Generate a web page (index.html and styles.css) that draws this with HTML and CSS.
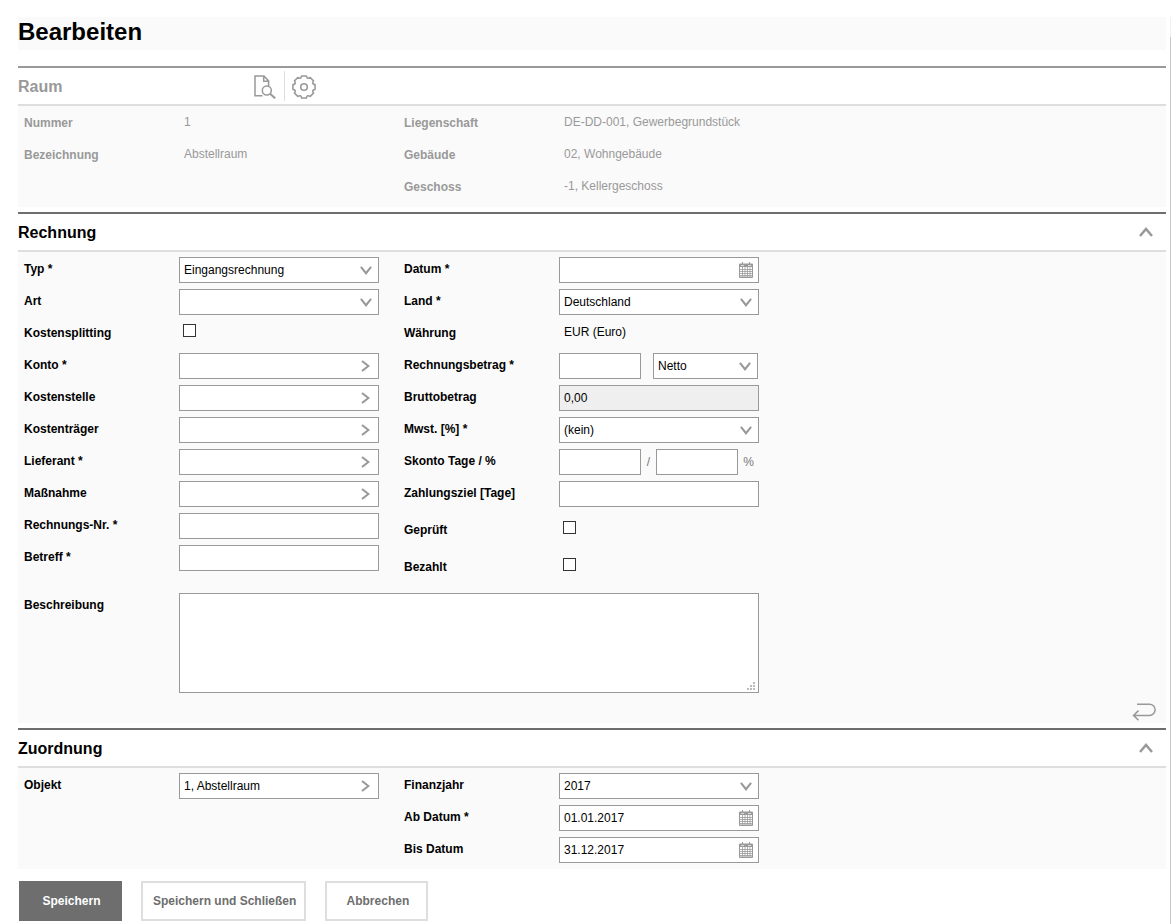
FILE: index.html
```html
<!DOCTYPE html>
<html lang="de">
<head>
<meta charset="utf-8">
<meta name="viewport" content="width=device-width, initial-scale=1">
<title>Bearbeiten</title>
<link rel="stylesheet" href="styles.css">
</head>
<body>
<svg class="sprite" aria-hidden="true">
  <symbol id="down" viewBox="0 0 12 9"><path d="M.9.8 6 7.2 11.1.8" fill="none" stroke="currentColor" stroke-width="2.1"/></symbol>
  <symbol id="right" viewBox="0 0 9 12"><path d="M1 1 7.4 6 1 11" fill="none" stroke="currentColor" stroke-width="2.1"/></symbol>
  <symbol id="up" viewBox="0 0 14 10"><path d="M1 9 7 2 13 9" fill="none" stroke="currentColor" stroke-width="2.5"/></symbol>
  <symbol id="calendar" viewBox="0 0 14 16">
    <path d="M1 1.5h12a1 1 0 0 1 1 1V15a1 1 0 0 1-1 1H1a1 1 0 0 1-1-1V2.500a1 1 0 0 1 1-1z" fill="currentColor"/>
    <path d="M3 0h1v3H3zM10 0h1v3h-1z" fill="currentColor"/>
    <path d="M2 3h3v1H2zM9 3h3v1H9z" fill="#ddd"/>
    <path d="M1 5h12v9.500H1z" fill="#fff"/>
    <path d="M3.500 5v9.500M6 5v9.500M8.500 5v9.500M11 5v9.500M1 7.500h12M1 9.500h12M1 11.500h12M1 13.500h12" fill="none" stroke="currentColor" stroke-width=".8"/>
  </symbol>
</svg>
<main class="page">
  <h1 class="page-title">Bearbeiten</h1>

  <section class="section section-muted">
    <header class="section-head">
      <h2 class="section-title section-title-tools">Raum</h2>
      <button class="icon-button tool-preview" type="button" aria-label="Vorschau">
        <svg width="22" height="24" viewBox="0 0 22 24" fill="none" stroke="currentColor" stroke-width="1.5"><path d="M8.500 20.800H1V.9h9l4.600 5v5M9.700 1v5.200h5"/><circle cx="12.800" cy="15.500" r="4.500"/><path d="m16 18.800 5.200 4.500" stroke-width="2"/></svg>
      </button>
      <button class="icon-button tool-settings" type="button" aria-label="Einstellungen">
        <svg width="24" height="24" viewBox="0 0 24 24" fill="none" stroke="currentColor" stroke-width="1.6" stroke-linejoin="round"><path d="M9.650.95h4.700Q15.100 4.600 18.150 2.500L21.500 5.850Q19.400 8.900 23.050 9.650V14.350Q19.400 15.100 21.500 18.150L18.150 21.500Q15.100 19.400 14.350 23.050H9.650Q8.900 19.400 5.850 21.500L2.500 18.150Q4.600 15.100.95 14.350V9.650Q4.600 8.900 2.500 5.850L5.850 2.500Q8.900 4.600 9.650.95z"/><circle cx="12" cy="12" r="3.300"/></svg>
      </button>
    </header>
    <div class="section-body columns">
      <dl class="column">
        <div class="row"><dt class="label">Nummer</dt><dd class="value">1</dd></div>
        <div class="row"><dt class="label">Bezeichnung</dt><dd class="value">Abstellraum</dd></div>
      </dl>
      <dl class="column">
        <div class="row"><dt class="label">Liegenschaft</dt><dd class="value">DE-DD-001, Gewerbegrundstück</dd></div>
        <div class="row"><dt class="label">Gebäude</dt><dd class="value">02, Wohngebäude</dd></div>
        <div class="row"><dt class="label">Geschoss</dt><dd class="value">-1, Kellergeschoss</dd></div>
      </dl>
    </div>
  </section>

  <form class="form">
    <section class="section">
      <header class="section-head">
        <h2 class="section-title">Rechnung</h2>
        <button class="icon-button toggle" type="button" aria-label="Rechnung einklappen"><svg width="14" height="10"><use href="#up"/></svg></button>
      </header>
      <div class="section-body">
        <div class="columns">
          <div class="column">
            <div class="row"><label class="label" for="typ">Typ *</label><div class="field"><select class="control" id="typ"><option>Eingangsrechnung</option></select><svg class="arrow" width="12" height="9"><use href="#down"/></svg></div></div>
            <div class="row"><label class="label" for="art">Art</label><div class="field"><select class="control" id="art"><option></option></select><svg class="arrow" width="12" height="9"><use href="#down"/></svg></div></div>
            <div class="row"><label class="label" for="split">Kostensplitting</label><input class="check" type="checkbox" id="split"></div>
            <div class="row"><label class="label" for="konto">Konto *</label><div class="field"><input class="control" type="text" id="konto"><button class="icon-button lookup" type="button" aria-label="Konto wählen"><svg width="9" height="12"><use href="#right"/></svg></button></div></div>
            <div class="row"><label class="label" for="stelle">Kostenstelle</label><div class="field"><input class="control" type="text" id="stelle"><button class="icon-button lookup" type="button" aria-label="Kostenstelle wählen"><svg width="9" height="12"><use href="#right"/></svg></button></div></div>
            <div class="row"><label class="label" for="traeger">Kostenträger</label><div class="field"><input class="control" type="text" id="traeger"><button class="icon-button lookup" type="button" aria-label="Kostenträger wählen"><svg width="9" height="12"><use href="#right"/></svg></button></div></div>
            <div class="row"><label class="label" for="lieferant">Lieferant *</label><div class="field"><input class="control" type="text" id="lieferant"><button class="icon-button lookup" type="button" aria-label="Lieferant wählen"><svg width="9" height="12"><use href="#right"/></svg></button></div></div>
            <div class="row"><label class="label" for="massnahme">Maßnahme</label><div class="field"><input class="control" type="text" id="massnahme"><button class="icon-button lookup" type="button" aria-label="Maßnahme wählen"><svg width="9" height="12"><use href="#right"/></svg></button></div></div>
            <div class="row"><label class="label" for="nr">Rechnungs-Nr. *</label><div class="field"><input class="control" type="text" id="nr"></div></div>
            <div class="row"><label class="label" for="betreff">Betreff *</label><div class="field"><input class="control" type="text" id="betreff"></div></div>
          </div>
          <div class="column">
            <div class="row"><label class="label" for="datum">Datum *</label><div class="field"><input class="control" type="text" id="datum"><button class="icon-button picker" type="button" aria-label="Datum wählen"><svg width="14" height="16"><use href="#calendar"/></svg></button></div></div>
            <div class="row"><label class="label" for="land">Land *</label><div class="field"><select class="control" id="land"><option>Deutschland</option></select><svg class="arrow" width="12" height="9"><use href="#down"/></svg></div></div>
            <div class="row"><span class="label">Währung</span><span class="value">EUR (Euro)</span></div>
            <div class="row"><label class="label" for="betrag">Rechnungsbetrag *</label>
              <div class="group group-amount"><div class="field"><input class="control" type="text" id="betrag"></div><div class="field"><select class="control" aria-label="Betragsart"><option>Netto</option></select><svg class="arrow" width="12" height="9"><use href="#down"/></svg></div></div></div>
            <div class="row"><label class="label" for="brutto">Bruttobetrag</label><div class="field field-readonly"><input class="control" type="text" id="brutto" value="0,00" readonly></div></div>
            <div class="row"><label class="label" for="mwst">Mwst. [%] *</label><div class="field"><select class="control" id="mwst"><option>(kein)</option></select><svg class="arrow" width="12" height="9"><use href="#down"/></svg></div></div>
            <div class="row"><label class="label" for="skonto">Skonto Tage / %</label>
              <div class="group group-discount"><div class="field"><input class="control" type="text" id="skonto"></div><span class="unit">/</span><div class="field"><input class="control" type="text" aria-label="Skonto Prozent"></div><span class="unit">%</span></div></div>
            <div class="row"><label class="label" for="ziel">Zahlungsziel [Tage]</label><div class="field"><input class="control" type="text" id="ziel"></div></div>
            <div class="row row-check"><label class="label" for="geprueft">Geprüft</label><input class="check" type="checkbox" id="geprueft"></div>
            <div class="row row-check"><label class="label" for="bezahlt">Bezahlt</label><input class="check" type="checkbox" id="bezahlt"></div>
          </div>
        </div>
        <div class="row row-notes">
          <label class="label" for="notes">Beschreibung</label>
          <div class="field field-notes"><textarea class="control notes" id="notes"></textarea>
            <svg class="grip" width="8" height="8" fill="currentColor"><path d="M6 0h2v2H6zM3 3h2v2H3zM6 3h2v2H6zM0 6h2v2H0zM3 6h2v2H3zM6 6h2v2H6z"/></svg>
          </div>
        </div>
        <div class="section-foot">
          <button class="icon-button" type="button" aria-label="Zurück"><svg width="24" height="18" viewBox="0 0 24 18" fill="none" stroke="currentColor" stroke-width="1.5"><path d="M5 1.200h12.500a5.600 5.600 0 0 1 0 11.200H1.400M6.500 7.600l-5 4.800 5 4.800"/></svg></button>
        </div>
      </div>
    </section>

    <section class="section">
      <header class="section-head">
        <h2 class="section-title">Zuordnung</h2>
        <button class="icon-button toggle" type="button" aria-label="Zuordnung einklappen"><svg width="14" height="10"><use href="#up"/></svg></button>
      </header>
      <div class="section-body columns">
        <div class="column">
          <div class="row"><label class="label" for="objekt">Objekt</label><div class="field"><input class="control" type="text" id="objekt" value="1, Abstellraum"><button class="icon-button lookup" type="button" aria-label="Objekt wählen"><svg width="9" height="12"><use href="#right"/></svg></button></div></div>
        </div>
        <div class="column">
          <div class="row"><label class="label" for="jahr">Finanzjahr</label><div class="field"><select class="control" id="jahr"><option>2017</option></select><svg class="arrow" width="12" height="9"><use href="#down"/></svg></div></div>
          <div class="row"><label class="label" for="ab">Ab Datum *</label><div class="field"><input class="control" type="text" id="ab" value="01.01.2017"><button class="icon-button picker" type="button" aria-label="Ab Datum wählen"><svg width="14" height="16"><use href="#calendar"/></svg></button></div></div>
          <div class="row"><label class="label" for="bis">Bis Datum</label><div class="field"><input class="control" type="text" id="bis" value="31.12.2017"><button class="icon-button picker" type="button" aria-label="Bis Datum wählen"><svg width="14" height="16"><use href="#calendar"/></svg></button></div></div>
        </div>
      </div>
    </section>

    <div class="actions">
      <button class="button button-primary" type="submit">Speichern</button>
      <button class="button" type="submit">Speichern und Schließen</button>
      <button class="button" type="button">Abbrechen</button>
    </div>
  </form>
</main>
</body>
</html>
```
FILE: styles.css
```css
* {
  box-sizing: border-box;
}

body {
  margin: 0;
  background: #fff;
  color: #000;
  font: 12px "Liberation Sans", Arial, sans-serif;
}

.sprite {
  display: none;
}

.page {
  min-height: 100vh;
  padding: 17px 5px 3px 18px;
  background: linear-gradient(transparent 17px, #f0f0f0 17px, #f0f0f0 37px, #c8c8c8 37px) right / 1px 100% no-repeat;
}

.page-title {
  margin: 0 0 16px;
  background: #fafafa;
  font-size: 24px;
  line-height: 30px;
  padding-bottom: 3px;
}

.section {
  margin-bottom: 5px;
}

.section-head {
  display: flex;
  align-items: center;
  height: 40px;
  border-top: 2px solid #6e6e6e;
  border-bottom: 2px solid #dedede;
}

.section-muted {
  color: #999;
}

.section-muted .section-head {
  border-top-color: #999;
}

.section-title {
  margin: 0;
  padding-top: 2px;
  font-size: 16px;
  line-height: 20px;
}

.section-title-tools {
  width: 236px;
}

.icon-button {
  display: flex;
  align-items: center;
  justify-content: center;
  padding: 0;
  border: 0;
  background: none;
  color: #999;
  cursor: pointer;
}

.tool-preview,
.tool-settings {
  height: 30px;
  padding-top: 2px;
}

.tool-preview {
  width: 30px;
  padding-right: 8px;
}

.tool-settings {
  padding-left: 7px;
  border-left: 1px solid #dedede;
}

.toggle {
  margin: 0 13px 0 auto;
}

.section-body {
  padding: 5px 0 0 6px;
  background: #fafafa;
}

.columns {
  display: flex;
  flex-wrap: wrap;
  column-gap: 25px;
}

.column {
  margin: 0;
}

.row {
  display: grid;
  grid-template-columns: 155px 200px;
  align-items: start;
  min-height: 32px;
}

.row-check {
  min-height: 37px;
  padding-top: 5px;
}

.row-notes {
  grid-template-columns: 155px 580px;
  margin-top: 6px;
}

.label {
  font-weight: bold;
  line-height: 24px;
}

.value {
  margin: 0;
  padding-left: 5px;
  line-height: 22px;
}

.field {
  display: grid;
  grid-template-columns: minmax(0, 1fr);
  align-items: center;
  height: 26px;
  border: 1px solid #999;
  background: #fff;
}

.field > * {
  grid-area: 1 / 1;
}

.field-readonly {
  background: #efefef;
}

.control {
  width: 100%;
  height: 24px;
  margin: 0;
  padding: 0 4px;
  border: 0;
  border-radius: 0;
  background: transparent;
  color: #000;
  font: inherit;
  appearance: none;
}

.arrow,
.grip {
  justify-self: end;
  color: #999;
  pointer-events: none;
}

.arrow {
  margin-right: 6px;
}

.lookup {
  justify-self: end;
  margin-right: 8px;
}

.picker {
  justify-self: end;
  margin-right: 5px;
}

.group {
  display: grid;
  align-items: center;
}

.group-amount {
  grid-template-columns: 82px 105px;
  column-gap: 12px;
}

.group-discount {
  grid-template-columns: 82px 15px 82px 1fr;
}

.unit {
  color: #777;
  text-align: center;
}

.check {
  width: 13px;
  height: 13px;
  margin: 3px 0 0 4px;
  border: 1px solid #333;
  background: #fff;
  appearance: none;
}

.check:checked {
  background: #6e6e6e;
}

.field-notes {
  height: 100px;
}

.notes {
  height: 98px;
  padding: 4px;
  resize: none;
}

.grip {
  align-self: end;
  margin: 0 3px 2px 0;
  color: #bbb;
}

.section-foot {
  display: flex;
  justify-content: flex-end;
  padding: 10px 10px 2px 0;
}

.actions {
  display: flex;
  flex-wrap: wrap;
  gap: 19px;
  padding: 7px 1px 0;
}

.button {
  min-width: 103px;
  height: 40px;
  padding: 0 8px 0 10px;
  border: 2px solid #dedede;
  background: #fff;
  color: #6e6e6e;
  font: bold 12px "Liberation Sans", Arial, sans-serif;
  cursor: pointer;
}

.button-primary {
  border-color: #6e6e6e;
  background: #6e6e6e;
  color: #fff;
}
```
